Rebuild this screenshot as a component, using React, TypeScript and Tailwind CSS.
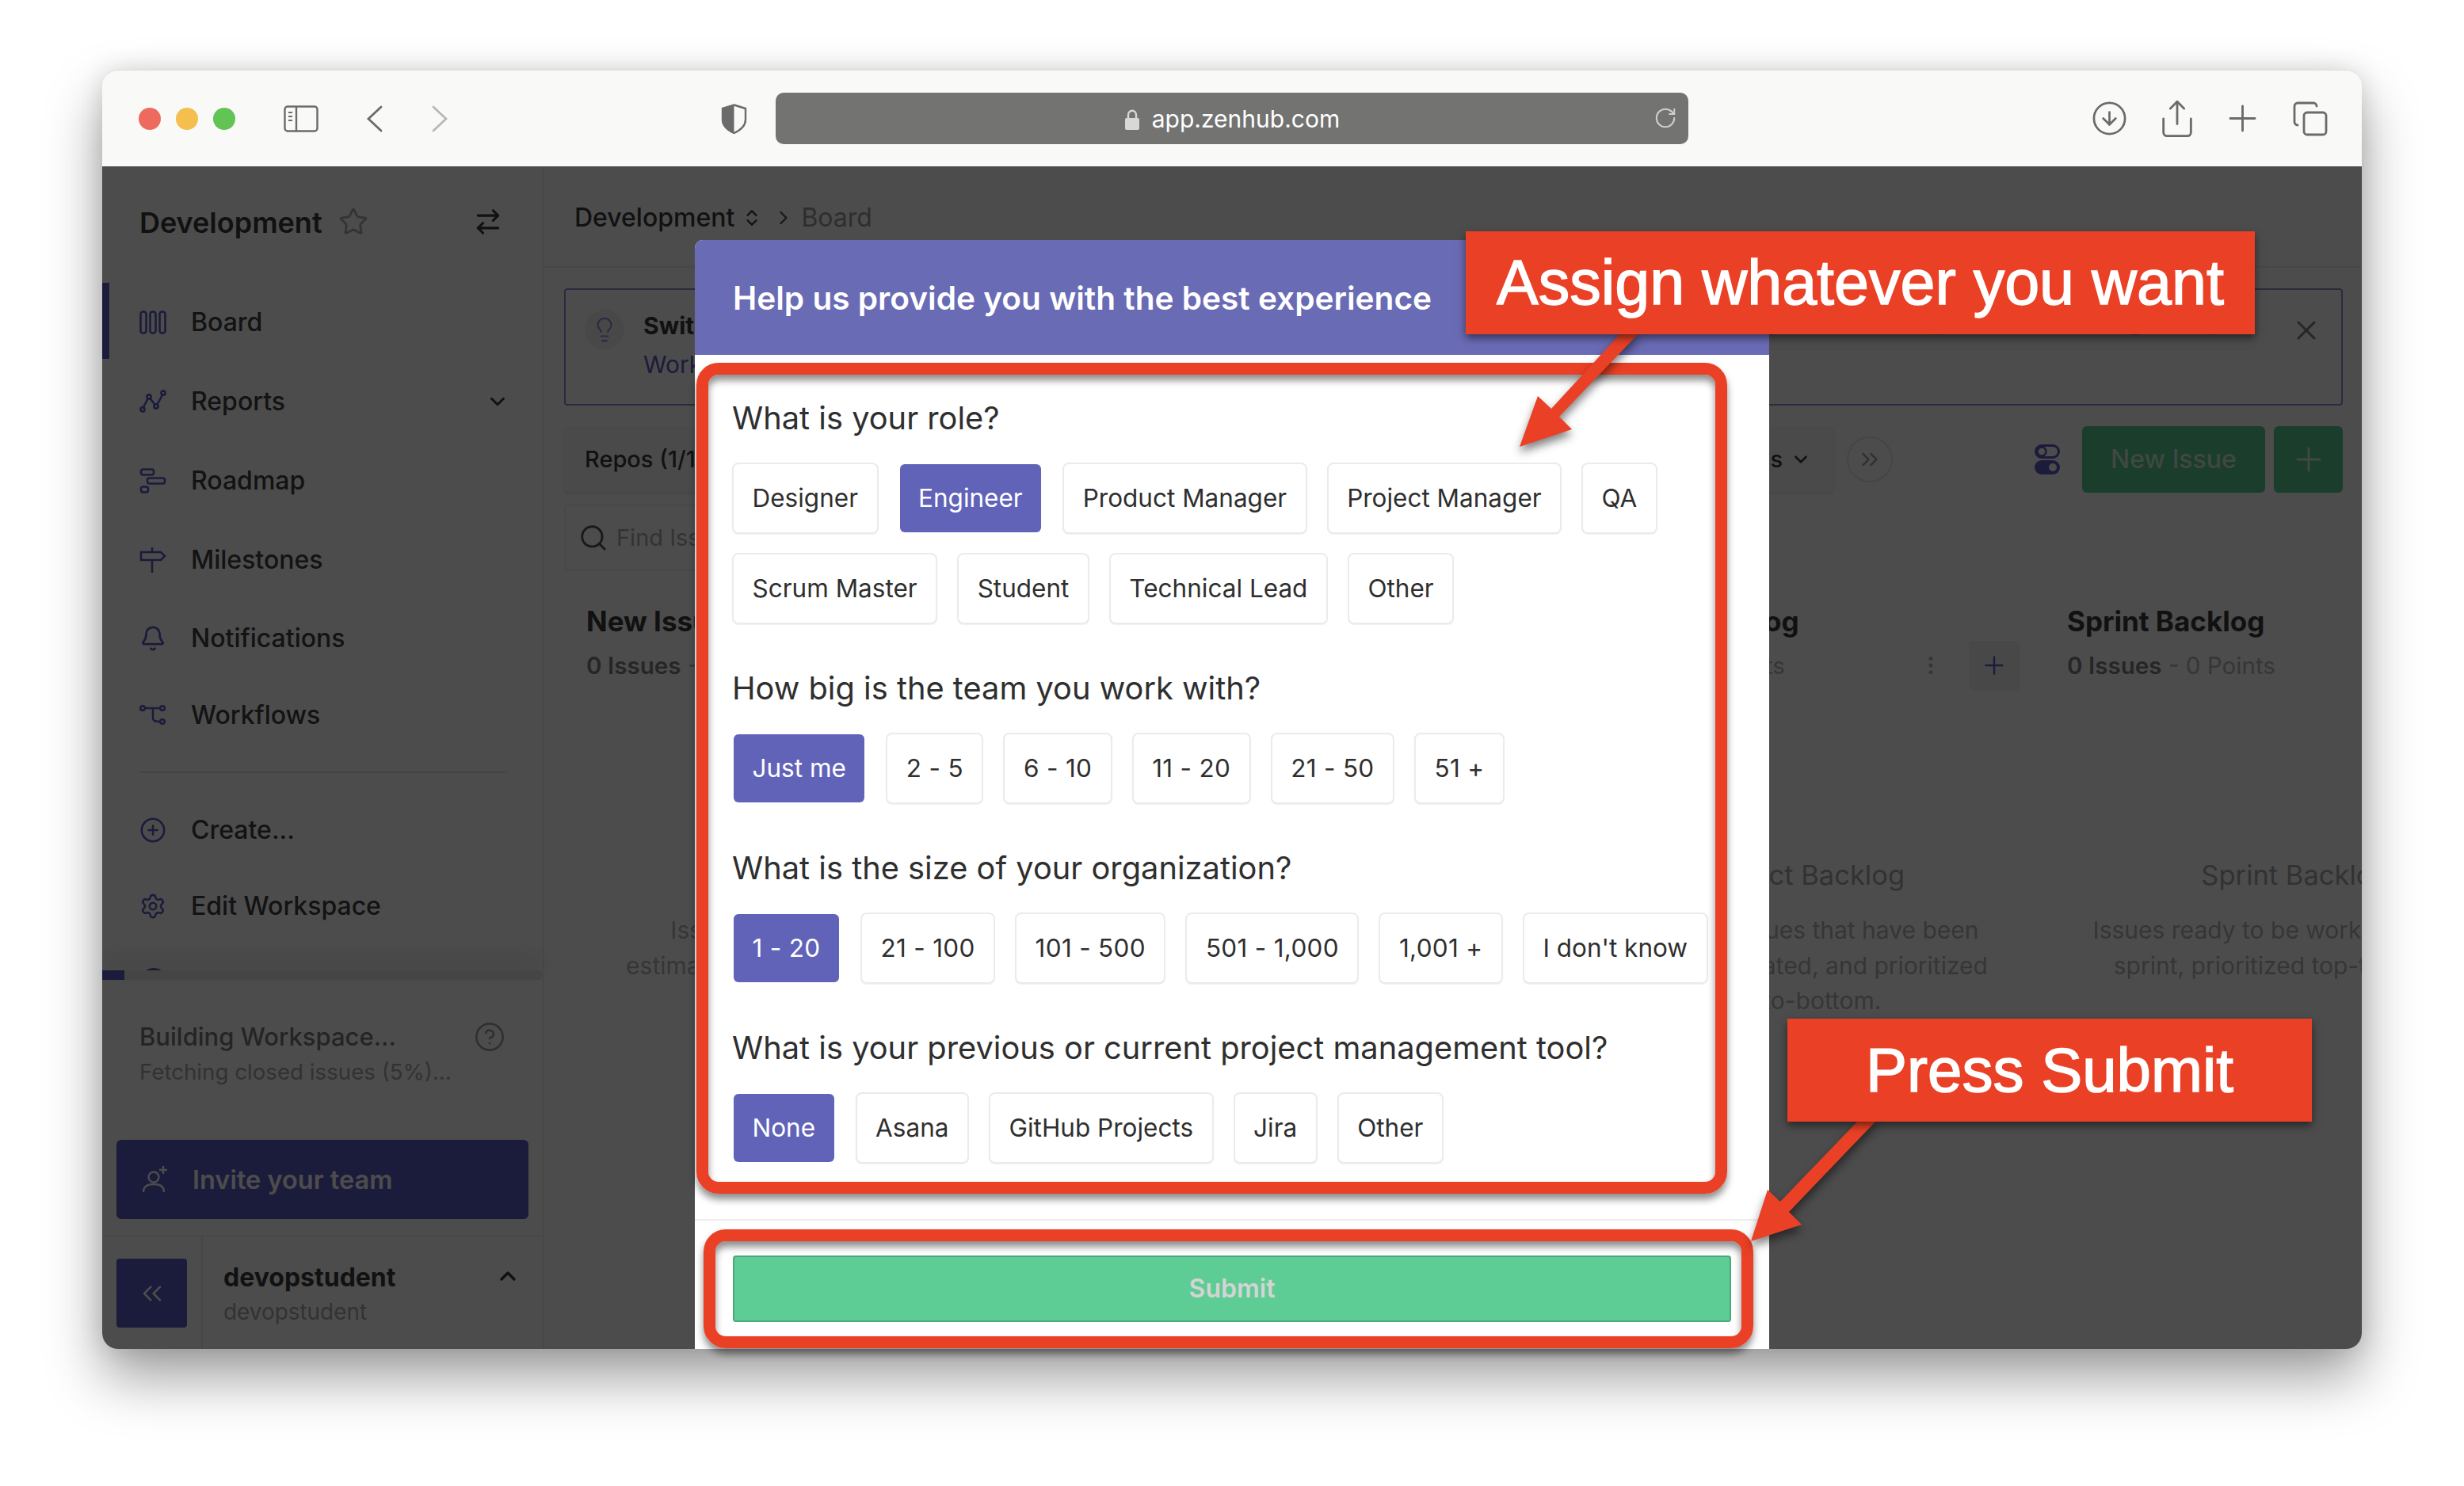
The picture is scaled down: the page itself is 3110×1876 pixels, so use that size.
import {
  ArrowRightLeft,
  Bell,
  ChevronDown,
  ChevronRight,
  ChevronsLeft,
  ChevronsRight,
  ChevronsUpDown,
  ChevronUp,
  CircleArrowDown,
  CircleHelp,
  CirclePlus,
  Copy,
  EllipsisVertical,
  Lightbulb,
  Plus,
  RotateCw,
  Search,
  Settings,
  Share,
  Star,
  X,
} from 'lucide-react';
import type { ReactNode } from 'react';

const NAVY = '#5a5dc5';

function BoardIcon() {
  return (
    <svg width="34" height="30" viewBox="0 0 34 30" fill="none" stroke={NAVY} strokeWidth="2.6">
      <rect x="1.5" y="1.5" width="7" height="27" rx="3" />
      <rect x="13.5" y="1.5" width="7" height="27" rx="3" />
      <rect x="25.5" y="1.5" width="7" height="27" rx="3" />
    </svg>
  );
}

function ReportsIcon() {
  return (
    <svg width="34" height="30" viewBox="0 0 34 30" fill="none" stroke={NAVY} strokeWidth="2.6">
      <circle cx="4" cy="25" r="2.6" />
      <circle cx="12" cy="9" r="2.6" />
      <circle cx="21" cy="21" r="2.6" />
      <circle cx="30" cy="4" r="2.6" />
      <path d="M5 22 L10.5 11.5 M13.5 11 L19.5 19 M22.5 18.5 L29 6.5" />
    </svg>
  );
}

function RoadmapIcon() {
  return (
    <svg width="34" height="32" viewBox="0 0 34 32" fill="none" stroke={NAVY} strokeWidth="2.6">
      <rect x="2" y="1.5" width="16" height="7" rx="2.5" />
      <rect x="10" y="12.5" width="22" height="7" rx="2.5" />
      <rect x="2" y="23.5" width="9" height="7" rx="2.5" />
    </svg>
  );
}

function MilestonesIcon() {
  return (
    <svg width="34" height="34" viewBox="0 0 34 34" fill="none" stroke={NAVY} strokeWidth="2.6">
      <path d="M2 7 H27 L32 12 L27 17 H2 Z M16 1 V7 M16 17 V33" />
    </svg>
  );
}

function WorkflowsIcon() {
  return (
    <svg width="34" height="28" viewBox="0 0 34 28" fill="none" stroke={NAVY} strokeWidth="2.6">
      <circle cx="4" cy="5" r="2.8" />
      <circle cx="29" cy="5" r="2.8" />
      <circle cx="29" cy="22" r="2.8" />
      <path d="M7 5 H26 M15 5 C 17 5 17 6 17 9 V17 C17 21 19 22 26 22" />
    </svg>
  );
}

function InviteIcon() {
  return (
    <svg width="34" height="36" viewBox="0 0 34 36" fill="none" stroke="#ffffff" strokeWidth="2.4">
      <circle cx="15" cy="15" r="6.5" />
      <path d="M2 34 C2 26 8 24 15 24 C22 24 28 26 28 34 M27 1 V11 M22 6 H32" />
    </svg>
  );
}

function ToggleIcon() {
  return (
    <svg width="32" height="38" viewBox="0 0 32 38" fill="none">
      <rect x="1.5" y="1.5" width="29" height="15" rx="7.5" stroke={NAVY} strokeWidth="3" />
      <circle cx="9" cy="9" r="5.5" fill="none" stroke={NAVY} strokeWidth="2.5" />
      <rect x="0" y="20" width="32" height="18" rx="9" fill={NAVY} />
      <circle cx="23" cy="29" r="5" fill="#fff" />
    </svg>
  );
}

function NavRow({ icon, label, height, active, end }: { icon: ReactNode; label: string; height: string; active?: boolean; end?: ReactNode }) {
  return (
    <div className={`relative flex items-center pl-[47px] pr-[42px] ${height}`}>
      {active && <div className="absolute left-0 top-0 bottom-[3px] w-[9px] bg-[#5a5dc5]" />}
      <span className="flex w-[34px] justify-center">{icon}</span>
      <span className="ml-[31px] text-[32px] font-medium text-[#404040]">{label}</span>
      {end && <span className="ml-auto">{end}</span>}
    </div>
  );
}

function Sidebar() {
  return (
    <aside className="flex w-[558px] shrink-0 flex-col border-r-2 border-[#eeeeee]">
      <div className="h-[1015px] overflow-hidden">
        <div className="flex h-[147px] items-start pl-[47px] pr-[50px] pt-[49px]">
          <span className="text-[36px] leading-[44px] font-semibold text-[#3a3a3a]">Development</span>
          <Star className="ml-[20px] mt-[2px] h-[38px] w-[38px] text-[#aaaaaa]" strokeWidth={1.8} />
          <ArrowRightLeft className="ml-auto mt-[2px] h-[38px] w-[38px] text-[#3a3a3a]" strokeWidth={2} />
        </div>
        <NavRow icon={<BoardIcon />} label="Board" height="h-[99px]" active />
        <NavRow
          icon={<ReportsIcon />}
          label="Reports"
          height="h-[101px]"
          end={<ChevronDown className="h-[30px] w-[30px] text-[#3a3a3a]" strokeWidth={2.4} />}
        />
        <NavRow icon={<RoadmapIcon />} label="Roadmap" height="h-[100px]" />
        <NavRow icon={<MilestonesIcon />} label="Milestones" height="h-[100px]" />
        <NavRow icon={<Bell className="h-[34px] w-[34px]" color={NAVY} />} label="Notifications" height="h-[98px]" />
        <NavRow icon={<WorkflowsIcon />} label="Workflows" height="h-[96px]" />
        <div className="ml-[47px] mr-[47px] mt-[23px] h-[2px] bg-[#e4e4e4]" />
        <div className="h-[24px]" />
        <NavRow icon={<CirclePlus className="h-[40px] w-[40px]" color={NAVY} strokeWidth={1.8} />} label="Create..." height="h-[96px]" />
        <NavRow icon={<Settings className="h-[40px] w-[40px]" color={NAVY} strokeWidth={1.8} />} label="Edit Workspace" height="h-[96px]" />
        <div className="flex h-[96px] items-center pl-[47px]">
          <div className="h-[36px] w-[36px] rounded-full border-[3px] border-[#5a5dc5]" />
        </div>
      </div>
      <div className="h-[12px] w-full rounded-r-full bg-[#e6e6e6] shadow-[0_-14px_28px_rgba(0,0,0,0.16)]">
        <div className="h-full w-[28px] bg-[#5a5dc5]" />
      </div>
      <div className="relative pl-[47px] pt-[52px]">
        <div className="text-[31px] leading-[40px] font-medium text-[#7a7a7a]">Building Workspace...</div>
        <div className="mt-[5px] text-[27.7px] leading-[38px] text-[#a8a8a8]">Fetching closed issues (5%)...</div>
        <CircleHelp className="absolute right-[47px] top-[52px] h-[40px] w-[40px] text-[#a0a0a0]" strokeWidth={1.6} />
      </div>
      <div className="mx-[18px] mt-[67px] flex h-[100px] items-center rounded-[6px] bg-[#5a5dc5] pl-[32px]">
        <InviteIcon />
        <span className="ml-[30px] mt-[2px] text-[32.5px] font-semibold text-white">Invite your team</span>
      </div>
      <div className="mt-[20px] flex flex-1 border-t-2 border-[#eeeeee]">
        <div className="flex w-[127px] shrink-0 items-start border-r-2 border-[#eeeeee] pl-[18px] pt-[28px]">
          <div className="flex h-[87px] w-[89px] items-center justify-center rounded-[4px] bg-[#5a5dc5]">
            <ChevronsLeft className="h-[40px] w-[40px] text-[#ffffff]" strokeWidth={1.6} />
          </div>
        </div>
        <div className="relative flex-1 pl-[26px] pt-[32px]">
          <div className="text-[32px] leading-[40px] font-bold text-[#3a3a3a]">devopstudent</div>
          <div className="mt-[4px] text-[27.9px] leading-[38px] text-[#a8a8a8]">devopstudent</div>
          <ChevronUp className="absolute right-[28px] top-[34px] h-[32px] w-[32px] text-[#3a3a3a]" strokeWidth={2.6} />
        </div>
      </div>
    </aside>
  );
}

function Column({ width, innerWidth, title, lines, tools }: { width: string; innerWidth: string; title: string; lines: string[]; tools?: boolean }) {
  return (
    <div className={`shrink-0 ${width}`}>
      <div className="text-[35px] leading-[40px] font-bold whitespace-nowrap text-[#3a3a3a]">{title}</div>
      <div className="mt-[16px] flex h-[40px] items-center text-[29.6px] whitespace-nowrap">
        <span className="font-semibold text-[#808080]">0 Issues</span>
        <span className="text-[#b4b4b4]">&nbsp;- 0 Points</span>
        {tools && (
          <>
            <EllipsisVertical className="ml-[169px] h-[30px] w-[30px] shrink-0 text-[#b4b4b4]" />
            <div className="ml-[33px] flex h-[63px] w-[65px] shrink-0 items-center justify-center rounded-[6px] bg-[#f2f2f6]">
              <Plus className="h-[36px] w-[36px]" color={NAVY} strokeWidth={1.6} />
            </div>
          </>
        )}
      </div>
      <div className={`mt-[223px] text-center ${innerWidth}`}>
        <div className="text-[34.5px] leading-[44px] whitespace-nowrap text-[#a8a8a8]">{title}</div>
        <div className="mt-[25px] text-[30px] leading-[44.5px] whitespace-nowrap text-[#b4b4b4]">
          {lines.map((l) => (
            <div key={l}>{l}</div>
          ))}
        </div>
      </div>
    </div>
  );
}

function Board() {
  return (
    <main className="min-w-0 flex-1 overflow-hidden">
      <div className="flex h-[128px] items-center border-b-2 border-[#eeeeee] pl-[38px] pt-[4px] text-[32px] font-medium">
        <span className="text-[#3a3a3a]">Development</span>
        <ChevronsUpDown className="ml-[9px] h-[26px] w-[26px] text-[#3a3a3a]" strokeWidth={2.2} />
        <ChevronRight className="ml-[13px] h-[28px] w-[28px] text-[#555555]" strokeWidth={2} />
        <span className="ml-[8px] font-normal text-[#999999]">Board</span>
      </div>

      <div className="pl-[25px] pr-[24px]">
        {/* Banner */}
        <div className="mt-[26px] flex h-[148px] rounded-[4px] border-2 border-[#8f91d8] pl-[24px] pr-[24px] pt-[25px]">
          <div className="flex h-[50px] w-[50px] shrink-0 items-center justify-center rounded-full bg-[#f0f0f5]">
            <Lightbulb className="h-[34px] w-[34px]" color="#8f91d8" strokeWidth={1.5} />
          </div>
          <div className="ml-[24px] flex-1 pr-[45px]">
            <div className="flex justify-between whitespace-nowrap text-[30px] leading-[40px]">
              <span className="font-bold text-[#3a3a3a]">Switch between Workspaces</span>
              <span className="text-[#808080]">
                Give your team access to similar sets of issues. <span className="text-[#5a5dc5]">See related</span>
              </span>
            </div>
            <div className="mt-[9px] text-[30px] leading-[40px] text-[#5a5dc5]">Workspaces</div>
          </div>
          <X className="mt-[6px] h-[40px] w-[40px] shrink-0 text-[#808080]" strokeWidth={1.8} />
        </div>

        {/* Filters */}
        <div className="mt-[26px] flex h-[83px] items-center justify-between">
          <div className="flex h-[82px] w-[320px] items-center rounded-[4px] bg-[#f7f7f7] pl-[26px] text-[29px] font-medium text-[#3a3a3a] shadow-[0_2px_4px_rgba(0,0,0,0.12)]">
            Repos (1/1)
          </div>
          <div className="flex items-center">
            <div className="flex h-[82px] w-[200px] items-center justify-end rounded-[4px] bg-[#f7f7f7] pr-[28px] text-[29px] font-medium text-[#3a3a3a] shadow-[0_2px_4px_rgba(0,0,0,0.12)]">
              Epics
              <ChevronDown className="ml-[10px] h-[26px] w-[26px]" strokeWidth={2.4} />
            </div>
            <div className="ml-[17px] flex h-[58px] w-[58px] items-center justify-center rounded-full border-2 border-[#e6e6e6]">
              <ChevronsRight className="h-[34px] w-[34px] text-[#999999]" strokeWidth={1.6} />
            </div>
            <div className="ml-[179px]">
              <ToggleIcon />
            </div>
            <div className="ml-[28px] flex h-[84px] w-[231px] items-center justify-center rounded-[6px] bg-[#5acb8f] text-[32px] font-medium text-[#d4f0de]">
              New Issue
            </div>
            <div className="ml-[11px] flex h-[84px] w-[87px] items-center justify-center rounded-[6px] bg-[#5acb8f]">
              <Plus className="h-[48px] w-[48px] text-[#d4f0de]" strokeWidth={1.5} />
            </div>
          </div>
        </div>

        {/* Search */}
        <div className="mt-[16px] flex h-[84px] w-[320px] items-center rounded-[4px] border-2 border-[#f2f2f2] pl-[16px] text-[29px] text-[#aaaaaa]">
          <Search className="h-[38px] w-[38px] text-[#555555]" strokeWidth={1.8} />
          <span className="ml-[10px]">Find Issues</span>
        </div>

        {/* Pipelines */}
        <div className="mt-[43px] flex pl-[28px]">
          <Column
            width="w-[631px]"
            innerWidth="w-[576px]"
            title="New Issues"
            lines={['Issues that have not been', 'estimated or prioritized by a team']}
          />
          <Column width="w-[619px]" innerWidth="w-[576px]" title="Icebox" lines={['Low priority issues']} />
          <Column
            width="w-[619px]"
            innerWidth="w-[560px]"
            title="Product Backlog"
            tools
            lines={['Epics and issues that have been', 'triaged, estimated, and prioritized', 'top-to-bottom.']}
          />
          <Column
            width="w-[576px]"
            innerWidth="w-[576px]"
            title="Sprint Backlog"
            lines={['Issues ready to be worked on in this', 'sprint, prioritized top-to-bottom.']}
          />
        </div>
      </div>
    </main>
  );
}

function Choice({ label, selected }: { label: string; selected?: boolean }) {
  // the digits in the original font run a little wider than Inter's
  const numeric = /\d/.test(label);
  return (
    <div
      className={`flex h-[90px] items-center rounded-[8px] border-2 bg-clip-padding px-[23.5px] text-[31.5px] ${
        numeric ? 'tracking-[0.3px]' : ''
      } ${
        selected
          ? 'border-transparent bg-[#6163b8] text-white'
          : 'border-[#ebebeb] bg-white text-[#2f2f2f] shadow-[0_1px_1px_rgba(0,0,0,0.06)]'
      }`}
    >
      {label}
    </div>
  );
}

const questions = [
  {
    q: 'What is your role?',
    top: 'mt-[56px]',
    selected: 'Engineer',
    options: ['Designer', 'Engineer', 'Product Manager', 'Project Manager', 'QA', 'Scrum Master', 'Student', 'Technical Lead', 'Other'],
  },
  { q: 'How big is the team you work with?', top: 'mt-[57px]', selected: 'Just me', options: ['Just me', '2 - 5', '6 - 10', '11 - 20', '21 - 50', '51 +'] },
  {
    q: 'What is the size of your organization?',
    top: 'mt-[57px]',
    selected: '1 - 20',
    options: ['1 - 20', '21 - 100', '101 - 500', '501 - 1,000', '1,001 +', "I don't know"],
  },
  {
    q: 'What is your previous or current project management tool?',
    top: 'mt-[57px]',
    selected: 'None',
    options: ['None', 'Asana', 'GitHub Projects', 'Jira', 'Other'],
  },
];

function Modal() {
  return (
    <div className="absolute bottom-0 left-[748px] top-[93px] flex w-[1356px] flex-col overflow-hidden rounded-t-[10px] bg-white">
      <div className="flex h-[145px] shrink-0 items-center bg-[#6a6bb5] pl-[48px] pt-[3px] text-[40.6px] font-semibold text-white">
        Help us provide you with the best experience
      </div>
      <div className="flex-1 pl-[47px] pr-[46px]">
        {questions.map((s) => (
          <div key={s.q} className={s.top}>
            <div className="text-[39.8px] leading-[48px] text-[#2f2f2f]">{s.q}</div>
            <div className="mt-[32px] flex flex-wrap gap-x-[25px] gap-y-[24px]">
              {s.options.map((o) => (
                <Choice key={o} label={o} selected={o === s.selected} />
              ))}
            </div>
          </div>
        ))}
      </div>
      <div className="h-[164px] shrink-0 border-t-2 border-[#eeeeee] px-[48px] pt-[44px]">
        <div className="flex h-[84px] items-center justify-center rounded-[4px] border-2 border-[#4aa87a] bg-[#5dcd95] text-[32px] font-semibold text-[#d4d4d4]">
          Submit
        </div>
      </div>
    </div>
  );
}

function Annotations() {
  const frame =
    'absolute rounded-[28px] border-[15px] border-[#ea4025] shadow-[0_7px_10px_rgba(0,0,0,0.45),inset_0_7px_10px_rgba(0,0,0,0.45)]';
  const callout =
    'absolute flex items-center justify-center bg-[#ea4025] font-["Liberation_Sans",sans-serif] text-white shadow-[0_5px_10px_rgba(0,0,0,0.5)] [-webkit-text-stroke:1.5px_white]';
  return (
    <>
      <div className={`${frame} left-[879px] top-[458px] h-[1049px] w-[1301px]`} />
      <div className={`${frame} left-[888px] top-[1552px] h-[150px] w-[1325px]`} />
      <svg className="absolute left-0 top-0 drop-shadow-[0_7px_6px_rgba(0,0,0,0.5)]" width="3110" height="1876" viewBox="0 0 3110 1876" fill="#ea4025">
        <polygon points="2048,418 2071,418 1968,526 1984,542 1918,564 1941,500 1958,516" />
        <polygon points="2348,1412 2371,1412 2258,1530 2274,1546 2210,1567 2231,1502 2247,1517" />
      </svg>
      <div className={`${callout} left-[1850px] top-[292px] h-[130px] w-[996px] text-[79px]`}>Assign whatever you want</div>
      <div className={`${callout} left-[2256px] top-[1286px] h-[130px] w-[662px] text-[78px]`}>Press Submit</div>
    </>
  );
}

export default function App() {
  return (
    <div className="relative h-[1876px] w-[3110px] overflow-hidden bg-white pl-[129px] pt-[88px] font-['Inter',sans-serif]">
      <div className="w-[2852px] rounded-[20px] shadow-[0_36px_70px_rgba(0,0,0,0.38),0_0_30px_rgba(0,0,0,0.12)]">
        {/* Browser toolbar */}
        <div className="flex h-[122px] items-center rounded-t-[20px] border-t border-[#dddddd] bg-[#f9f9f7] pl-[46px]">
          <span className="h-[28px] w-[28px] rounded-full bg-[#ee6a5f]" />
          <span className="ml-[19px] h-[28px] w-[28px] rounded-full bg-[#f5bf4f]" />
          <span className="ml-[19px] h-[28px] w-[28px] rounded-full bg-[#61c454]" />
          <svg className="ml-[61px]" width="44" height="34" viewBox="0 0 44 34" fill="none" stroke="#6b6b6b" strokeWidth="2.4">
            <rect x="1.5" y="1.5" width="41" height="31" rx="3.5" />
            <path d="M16 2 V32" />
            <path d="M6 9 H11 M6 14 H11 M6 19 H11" strokeWidth="2" />
          </svg>
          <svg className="ml-[60px]" width="21" height="34" viewBox="0 0 21 34" fill="none" stroke="#6b6b6b" strokeWidth="2.8" strokeLinecap="round">
            <path d="M19 2 L3 17 L19 32" />
          </svg>
          <svg className="ml-[62px]" width="21" height="34" viewBox="0 0 21 34" fill="none" stroke="#b8b8b8" strokeWidth="2.8" strokeLinecap="round">
            <path d="M2 2 L18 17 L2 32" />
          </svg>
          <svg className="ml-[344px]" width="33" height="38" viewBox="0 0 33 38" fill="none">
            <path d="M16.5 1.5 L31 6 V20 C31 29 23 34 16.5 37 C10 34 2 29 2 20 V6 Z" stroke="#6b6b6b" strokeWidth="2.4" />
            <path d="M16.5 1.5 V37 C10 34 2 29 2 20 V6 Z" fill="#6b6b6b" />
          </svg>
          <div className="relative ml-[36px] flex h-[65px] w-[1152px] items-center justify-center rounded-[10px] bg-[#737371] pt-[2px] text-[30px] text-white">
            <svg className="mr-[15px]" width="20" height="28" viewBox="0 0 20 28" fill="none">
              <path d="M5 13 V8 C5 1 15 1 15 8 V13" stroke="#d8d8d8" strokeWidth="2.4" />
              <rect x="1" y="12" width="18" height="15" rx="2" fill="#d8d8d8" />
            </svg>
            app.zenhub.com
            <RotateCw className="absolute right-[14px] top-[17px] h-[30px] w-[30px] text-[#cfcfcf]" strokeWidth={1.6} />
          </div>
          <CircleArrowDown className="ml-[508px] h-[47px] w-[47px] text-[#6b6b6b]" strokeWidth={1.4} />
          <Share className="ml-[36px] h-[52px] w-[52px] text-[#6b6b6b]" strokeWidth={1.3} />
          <Plus className="ml-[30px] h-[53px] w-[53px] text-[#6b6b6b]" strokeWidth={1.3} />
          <Copy className="ml-[35px] h-[48px] w-[48px] text-[#6b6b6b]" strokeWidth={1.4} />
        </div>

        {/* App under the dimmed overlay */}
        <div className="relative flex h-[1493px] overflow-hidden rounded-b-[20px] bg-white">
          <Sidebar />
          <Board />
          <div className="absolute inset-0 bg-black/70" />
          <Modal />
        </div>
      </div>
      <Annotations />
    </div>
  );
}
